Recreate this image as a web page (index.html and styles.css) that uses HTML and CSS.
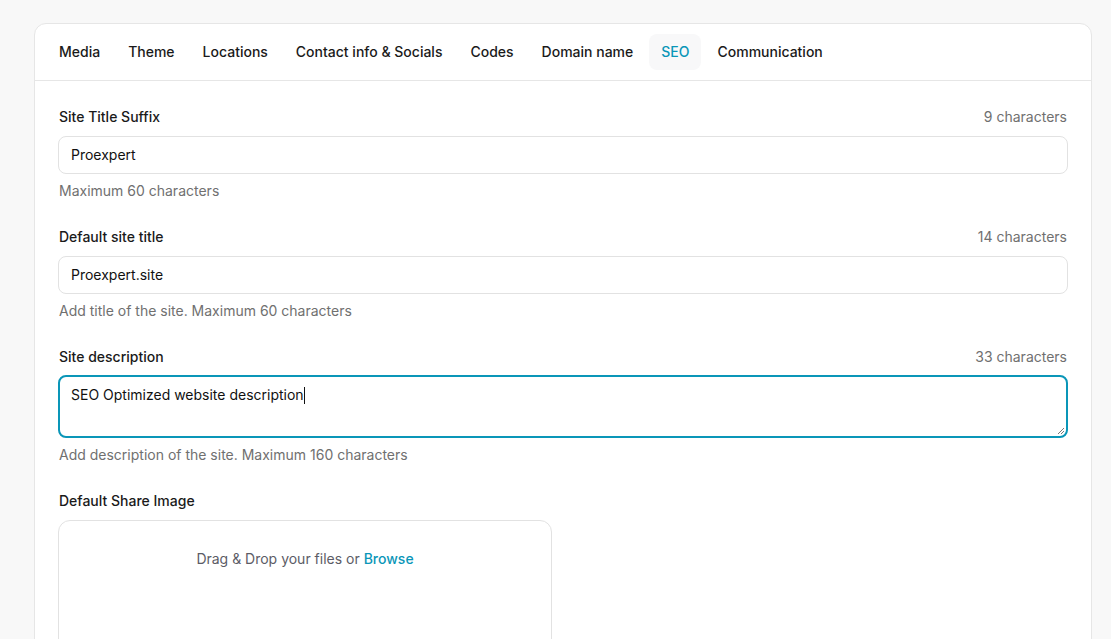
FILE: index.html
```html
<!DOCTYPE html>
<html>
<head>
<meta charset="utf-8">
<link rel="stylesheet" href="styles.css">
</head>
<body>
<div class="page">
  <div class="card">
    <nav class="tabs">
      <span class="tab">Media</span>
      <span class="tab">Theme</span>
      <span class="tab">Locations</span>
      <span class="tab">Contact info &amp; Socials</span>
      <span class="tab">Codes</span>
      <span class="tab">Domain name</span>
      <span class="tab active">SEO</span>
      <span class="tab">Communication</span>
    </nav>
    <div class="content">
      <div class="field">
        <div class="field-head"><label>Site Title Suffix</label><span class="count">9 characters</span></div>
        <div class="input">Proexpert</div>
        <div class="help">Maximum 60 characters</div>
      </div>
      <div class="field">
        <div class="field-head"><label>Default site title</label><span class="count">14 characters</span></div>
        <div class="input">Proexpert.site</div>
        <div class="help">Add title of the site. Maximum 60 characters</div>
      </div>
      <div class="field">
        <div class="field-head"><label>Site description</label><span class="count">33 characters</span></div>
        <div class="textarea">SEO Optimized website description<span class="caret"></span>
          <svg class="grip" width="8" height="8" viewBox="0 0 8 8"><path d="M7 1L1 7M7 4L4 7" stroke="#777" stroke-width="1"/></svg>
        </div>
        <div class="help">Add description of the site. Maximum 160 characters</div>
      </div>
      <div class="field">
        <div class="field-head"><label>Default Share Image</label></div>
        <div class="dropzone">Drag &amp; Drop your files or <span class="browse">Browse</span></div>
      </div>
    </div>
  </div>
</div>
</body>
</html>
```
FILE: styles.css
```css
* { box-sizing: border-box; }
html, body { margin: 0; padding: 0; }
body {
  background: #f8f8f8;
  font-family: Inter, "Noto Sans", sans-serif;
  font-size: 14px;
  color: #111;
  overflow: hidden;
  height: 639px;
}
.page { padding: 23px 19px 0 34px; }
.card {
  background: #fff;
  border: 1px solid #e6e6e6;
  border-radius: 12px;
  height: 700px;
}
.tabs {
  display: flex;
  gap: 4px;
  padding: 10px 12px 10px 12px;
  border-bottom: 1px solid #e6e6e6;
}
.tab {
  height: 36px;
  line-height: 36px;
  padding: 0 12px;
  border-radius: 8px;
  font-weight: 500;
  color: #1a1a1a;
}
.tab.active { background: #f8f8f9; color: #0a96b8; }
.content { padding: 26px 24px 0 24px; }
.field { margin-bottom: 26px; }
.field-head {
  display: flex;
  justify-content: space-between;
  line-height: 20px;
  margin-bottom: 9px;
}
.field-head label { font-weight: 500; color: #1a1a1a; }
.count { color: #707070; }
.input {
  height: 38px;
  border: 1px solid #e2e2e2;
  border-radius: 8px;
  padding: 0 12px;
  line-height: 36px;
  margin: 0 -1px;
}
.help { color: #707070; line-height: 20px; margin-top: 7px; }
.textarea {
  position: relative;
  height: 63px;
  border: 2px solid #0a96b8;
  border-radius: 8px;
  padding: 8px 11px 7px;
  line-height: 20px;
  margin: -1px -1px 0;
}
.caret { display: inline-block; width: 1px; height: 17px; background: #111; vertical-align: -4px; }
.grip { position: absolute; right: 1px; bottom: 1px; }
.dropzone {
  width: 494px;
  height: 200px;
  margin-left: -1px;
  border: 1px solid #e2e2e2;
  border-radius: 12px;
  text-align: center;
  padding-top: 28px;
  line-height: 20px;
  color: #5c5c66;
}
.browse { color: #0a96b8; font-weight: 500; }
```
